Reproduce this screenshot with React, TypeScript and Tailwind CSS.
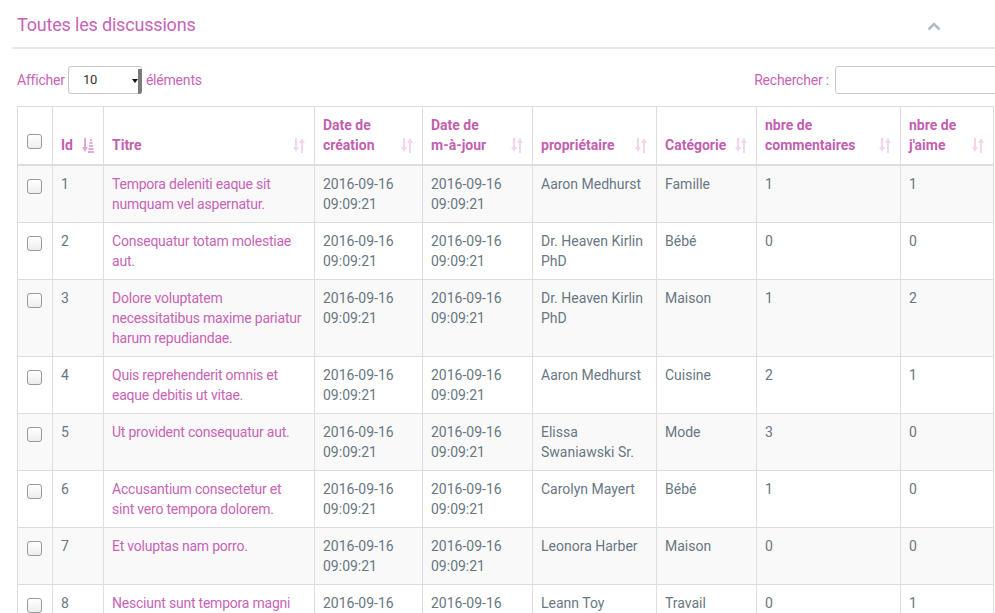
import React from "react";

const rows = [
  { id: 1, titre: "Tempora deleniti eaque sit numquam vel aspernatur.", owner: "Aaron Medhurst", cat: "Famille", com: 1, like: 1 },
  { id: 2, titre: "Consequatur totam molestiae aut.", owner: "Dr. Heaven Kirlin PhD", cat: "Bébé", com: 0, like: 0 },
  { id: 3, titre: "Dolore voluptatem necessitatibus maxime pariatur harum repudiandae.", owner: "Dr. Heaven Kirlin PhD", cat: "Maison", com: 1, like: 2 },
  { id: 4, titre: "Quis reprehenderit omnis et eaque debitis ut vitae.", owner: "Aaron Medhurst", cat: "Cuisine", com: 2, like: 1 },
  { id: 5, titre: "Ut provident consequatur aut.", owner: "Elissa Swaniawski Sr.", cat: "Mode", com: 3, like: 0 },
  { id: 6, titre: "Accusantium consectetur et sint vero tempora dolorem.", owner: "Carolyn Mayert", cat: "Bébé", com: 1, like: 0 },
  { id: 7, titre: "Et voluptas nam porro.", owner: "Leonora Harber", cat: "Maison", com: 0, like: 0 },
  { id: 8, titre: "Nesciunt sunt tempora magni quia.", owner: "Leann Toy", cat: "Travail", com: 0, like: 1 },
];

function SortIcon() {
  return (
    <svg width="12" height="15" viewBox="0 0 12 15" className="absolute right-[9px] bottom-[11px]">
      <g fill="#f3d6ee">
        <rect x="2" y="0" width="2" height="11" />
        <polygon points="0,9 6,9 3,14" />
        <rect x="8" y="4" width="2" height="11" />
        <polygon points="6,5 12,5 9,0" />
      </g>
    </svg>
  );
}

function SortAscIcon() {
  return (
    <svg width="13" height="15" viewBox="0 0 13 15" className="absolute right-[8px] bottom-[11px]">
      <g fill="#dfa9d6">
        <rect x="2" y="0" width="2" height="11" />
        <polygon points="0,9 6,9 3,14" />
        <rect x="8" y="1" width="2" height="2" />
        <rect x="7.5" y="4" width="3" height="2" />
        <rect x="7" y="7" width="4" height="2" />
        <rect x="6.5" y="10" width="5" height="2" />
        <rect x="6" y="13" width="6" height="2" />
      </g>
    </svg>
  );
}

function Check() {
  return (
    <div className="w-[15px] h-[15px] rounded-[3px] border border-[#9a9a9a] bg-gradient-to-b from-white to-[#ededed]" />
  );
}

export default function App() {
  const th = "relative border border-[#dddddd] border-b-2 align-bottom pl-[8px] pr-[26px] pt-[8px] pb-[9px] text-left font-bold text-[#c35fb0]";
  const td = "border border-[#dddddd] align-top p-[8px]";
  return (
    <div
      className="w-[995px] h-[613px] overflow-hidden bg-white text-[14px] leading-[20px] text-[#687783]"
      style={{ fontFamily: "Roboto, 'Liberation Sans', sans-serif" }}
    >
      <div className="ml-[12px] w-[1010px]">
        <div className="h-[49px] flex items-center pt-[3px] pl-[5px] border-b-2 border-[#e5e9ec]">
          <h2 className="text-[18px] tracking-[-0.18px] text-[#c864b6] font-normal">Toutes les discussions</h2>
          <svg width="14" height="9" viewBox="0 0 14 9" className="ml-[731px] mt-[2px]">
            <polyline points="1.5,7.5 7,2 12.5,7.5" fill="none" stroke="#b3bcc5" strokeWidth="2.6" />
          </svg>
        </div>

        <div className="ml-[5px] mt-[17px] w-[993px] flex items-center justify-between h-[28px] text-[#c864b6] tracking-[-0.2px]">
          <div className="flex items-center">
            <span>Afficher</span>
            <div className="ml-[3px] w-[74px] h-[28px] rounded-[3px] border border-[#c8c8c8] flex items-center pl-[14px] relative text-[13px] text-[#333]">
              10
              <div className="absolute right-[-1px] top-[2px] bottom-[-1px] w-[4px] bg-[#7a7a7a] rounded-br-[3px]" />
              <svg width="6" height="4" viewBox="0 0 6 4" className="absolute right-[3px] top-[12px]">
                <polygon points="0,0 6,0 3,4" fill="#111" />
              </svg>
            </div>
            <span className="ml-[4px]">éléments</span>
          </div>
          <div className="flex items-center">
            <span>Rechercher :</span>
            <div className="ml-[6px] w-[175px] h-[28px] rounded-[3px] border border-[#c8c8c8]" />
          </div>
        </div>

        <table className="ml-[5px] mt-[12px] w-[976px] table-fixed border-collapse">
          <colgroup>
            <col className="w-[35px]" />
            <col className="w-[51px]" />
            <col className="w-[211px]" />
            <col className="w-[108px]" />
            <col className="w-[110px]" />
            <col className="w-[124px]" />
            <col className="w-[100px]" />
            <col className="w-[144px]" />
            <col className="w-[93px]" />
          </colgroup>
          <thead>
            <tr>
              <th className="border border-[#dddddd] border-b-2 align-bottom pl-[9px] pb-[15px]">
                <Check />
              </th>
              <th className={th}>
                Id
                <SortAscIcon />
              </th>
              <th className={th}>
                Titre
                <SortIcon />
              </th>
              <th className={th}>
                Date de
                <br />
                création
                <SortIcon />
              </th>
              <th className={th}>
                Date de
                <br />
                m-à-jour
                <SortIcon />
              </th>
              <th className={th}>
                propriétaire
                <SortIcon />
              </th>
              <th className={th}>
                Catégorie
                <SortIcon />
              </th>
              <th className={th}>
                nbre de
                <br />
                commentaires
                <SortIcon />
              </th>
              <th className={th}>
                nbre de
                <br />
                j'aime
                <SortIcon />
              </th>
            </tr>
          </thead>
          <tbody>
            {rows.map((r, i) => (
              <tr key={r.id} className={i % 2 === 0 ? "bg-[#f9f9f9]" : "bg-white"}>
                <td className={`${td} pl-[9px] pt-[13px]`}>
                  <Check />
                </td>
                <td className={td}>{r.id}</td>
                <td className={`${td} text-[#c864b6] tracking-[-0.22px]`}>{r.titre}</td>
                <td className={td}>
                  2016-09-16
                  <br />
                  09:09:21
                </td>
                <td className={td}>
                  2016-09-16
                  <br />
                  09:09:21
                </td>
                <td className={td}>{r.owner}</td>
                <td className={td}>{r.cat}</td>
                <td className={td}>{r.com}</td>
                <td className={td}>{r.like}</td>
              </tr>
            ))}
          </tbody>
        </table>
      </div>
    </div>
  );
}
